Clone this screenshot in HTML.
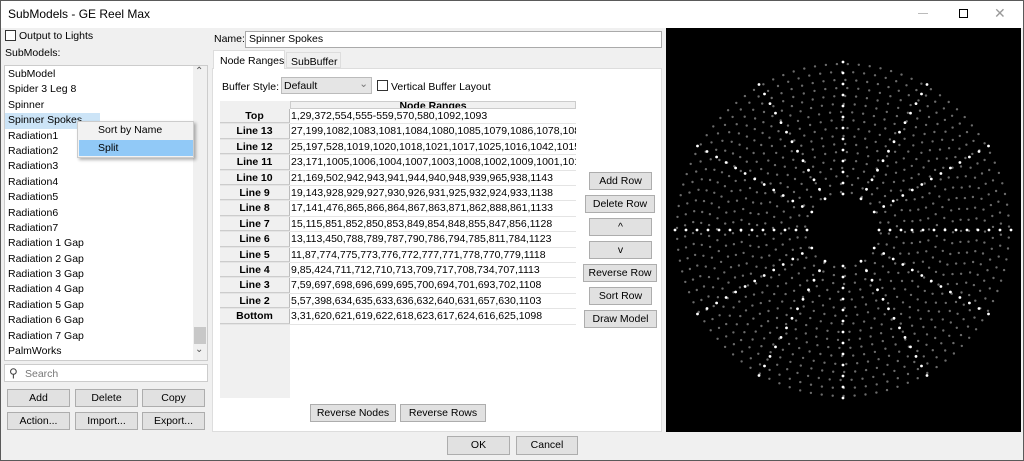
<!DOCTYPE html>
<html><head><meta charset="utf-8"><style>
*{box-sizing:border-box;margin:0;padding:0}
body{width:1024px;height:461px;background:#f0f0f0;font-family:"Liberation Sans",sans-serif;font-size:10.5px;color:#000;position:relative;overflow:hidden}
.a{position:absolute;white-space:nowrap}
.btn{position:absolute;background:#e1e1e1;border:1px solid #adadad;text-align:center;font-size:10.5px;line-height:16px}
.lst div{height:15.4px;line-height:15.4px;padding-left:3px;font-size:10.5px}
.row{position:absolute;left:220px;width:356px;height:15.4px;border-bottom:1px solid #e4e4e4}
.row .h{position:absolute;left:0;width:70px;height:100%;background:#f0f0f0;border-right:1px solid #bbb;border-bottom:1px solid #ccc;text-align:center;font-weight:bold;line-height:15px}
.row .v{position:absolute;left:71px;line-height:15px;white-space:nowrap;overflow:hidden;width:285px}
</style></head><body>
<div class="a" style="left:0;top:0;width:1024px;height:461px;border:1px solid #5a5a5a"></div>
<div class="a" style="left:1px;top:1px;width:1022px;height:27px;background:#fff"></div>
<div class="a" style="left:8px;top:7px;font-size:12px">SubModels - GE Reel Max</div>
<div class="a" style="left:918px;top:13px;width:10px;height:1px;background:#bbb"></div>
<div class="a" style="left:959px;top:9px;width:9px;height:9px;border:1px solid #000"></div>
<div class="a" style="left:994px;top:5px;font-size:14px;color:#999">✕</div>

<div class="a" style="left:5px;top:30px;width:11px;height:11px;border:1px solid #333;background:#fff"></div>
<div class="a" style="left:19px;top:30px">Output to Lights</div>
<div class="a" style="left:5px;top:47px">SubModels:</div>
<div class="a" style="left:4px;top:65px;width:204px;height:296px;background:#fff;border:1px solid #ccc"></div>
<div class="a lst" style="left:5px;top:67px;width:188px">
<div>SubModel</div><div>Spider 3 Leg 8</div><div>Spinner</div><div style="background:#cce4f7;width:95px">Spinner Spokes</div><div>Radiation1</div><div>Radiation2</div><div>Radiation3</div><div>Radiation4</div><div>Radiation5</div><div>Radiation6</div><div>Radiation7</div><div>Radiation 1 Gap</div><div>Radiation 2 Gap</div><div>Radiation 3 Gap</div><div>Radiation 4 Gap</div><div>Radiation 5 Gap</div><div>Radiation 6 Gap</div><div>Radiation 7 Gap</div><div>PalmWorks</div></div>
<div class="a" style="left:193px;top:66px;width:14px;height:294px;background:#f0f0f0"></div>
<div class="a" style="left:194px;top:327px;width:12px;height:17px;background:#c8c8c8"></div>
<div class="a" style="left:195px;top:66px;font-size:10px;color:#555">⌃</div>
<div class="a" style="left:195px;top:344px;font-size:10px;color:#555">⌄</div>
<div class="a" style="left:77px;top:121px;width:117px;height:37px;background:#f2f2f2;border:1px solid #ccc;box-shadow:2px 2px 3px rgba(0,0,0,.3)"></div>
<div class="a" style="left:98px;top:124px">Sort by Name</div>
<div class="a" style="left:79px;top:140px;width:114px;height:16px;background:#91c9f7"></div>
<div class="a" style="left:98px;top:142px">Split</div>

<div class="a" style="left:4px;top:364px;width:204px;height:18px;background:#fff;border:1px solid #ccc"></div>
<div class="a" style="left:9px;top:366px;font-size:12px;color:#444">⚲</div>
<div class="a" style="left:25px;top:368px;color:#777">Search</div>
<div class="btn" style="left:7px;top:389px;width:63px;height:18px">Add</div>
<div class="btn" style="left:75px;top:389px;width:63px;height:18px">Delete</div>
<div class="btn" style="left:142px;top:389px;width:63px;height:18px">Copy</div>
<div class="btn" style="left:7px;top:412px;width:63px;height:18px">Action...</div>
<div class="btn" style="left:75px;top:412px;width:63px;height:18px">Import...</div>
<div class="btn" style="left:142px;top:412px;width:63px;height:18px">Export...</div>

<div class="a" style="left:214px;top:33px">Name:</div>
<div class="a" style="left:245px;top:31px;width:417px;height:17px;background:#fff;border:1px solid #aaa;padding-left:3px;line-height:15px">Spinner Spokes</div>
<div class="a" style="left:212px;top:68px;width:450px;height:364px;background:#fff;border:1px solid #ddd"></div>
<div class="a" style="left:213px;top:50px;width:72px;height:19px;background:#fff;border:1px solid #ddd;border-bottom:none;padding:4px 0 0 6px">Node Ranges</div>
<div class="a" style="left:286px;top:52px;width:55px;height:16px;background:#f0f0f0;border:1px solid #ddd;padding:3px 0 0 4px">SubBuffer</div>
<div class="a" style="left:222px;top:81px">Buffer Style:</div>
<div class="a" style="left:281px;top:77px;width:91px;height:17px;background:#e5e5e5;border:1px solid #bbb;padding:2px 0 0 2px">Default<span style="position:absolute;right:3px;top:0;color:#777">⌄</span></div>
<div class="a" style="left:377px;top:80px;width:11px;height:11px;border:1px solid #333"></div>
<div class="a" style="left:391px;top:81px">Vertical Buffer Layout</div>
<div class="a" style="left:220px;top:101px;width:70px;height:297px;background:#f0f0f0"></div>
<div class="a" style="left:290px;top:101px;width:286px;height:8px;background:#f0f0f0;border:1px solid #ccc;overflow:hidden;text-align:center;font-weight:bold;line-height:9px">Node Ranges</div>
<div id="g"></div>

<div class="btn" style="left:589px;top:172px;width:63px;height:18px">Add Row</div>
<div class="btn" style="left:585px;top:195px;width:70px;height:18px">Delete Row</div>
<div class="btn" style="left:589px;top:218px;width:63px;height:18px">^</div>
<div class="btn" style="left:589px;top:241px;width:63px;height:18px">v</div>
<div class="btn" style="left:583px;top:264px;width:74px;height:18px">Reverse Row</div>
<div class="btn" style="left:589px;top:287px;width:63px;height:18px">Sort Row</div>
<div class="btn" style="left:584px;top:310px;width:73px;height:18px">Draw Model</div>
<div class="btn" style="left:310px;top:404px;width:86px;height:18px">Reverse Nodes</div>
<div class="btn" style="left:400px;top:404px;width:86px;height:18px">Reverse Rows</div>
<div class="btn" style="left:447px;top:436px;width:63px;height:19px">OK</div>
<div class="btn" style="left:516px;top:436px;width:62px;height:19px">Cancel</div>

<svg class="a" style="left:666px;top:28px" width="355" height="404"><rect width="355" height="404" fill="#000"/><g id="d"></g></svg>
<script>
var rows=[["Top","1,29,372,554,555-559,570,580,1092,1093"],["Line 13","27,199,1082,1083,1081,1084,1080,1085,1079,1086,1078,1087,1188"],["Line 12","25,197,528,1019,1020,1018,1021,1017,1025,1016,1042,1015,1158"],["Line 11","23,171,1005,1006,1004,1007,1003,1008,1002,1009,1001,1010,1153"],["Line 10","21,169,502,942,943,941,944,940,948,939,965,938,1143"],["Line 9","19,143,928,929,927,930,926,931,925,932,924,933,1138"],["Line 8","17,141,476,865,866,864,867,863,871,862,888,861,1133"],["Line 7","15,115,851,852,850,853,849,854,848,855,847,856,1128"],["Line 6","13,113,450,788,789,787,790,786,794,785,811,784,1123"],["Line 5","11,87,774,775,773,776,772,777,771,778,770,779,1118"],["Line 4","9,85,424,711,712,710,713,709,717,708,734,707,1113"],["Line 3","7,59,697,698,696,699,695,700,694,701,693,702,1108"],["Line 2","5,57,398,634,635,633,636,632,640,631,657,630,1103"],["Bottom","3,31,620,621,619,622,618,623,617,624,616,625,1098"]];
var h="";rows.forEach(function(r,i){h+='<div class="row" style="top:'+(109+i*15.4)+'px"><div class="h">'+r[0]+'</div><div class="v">'+r[1]+'</div></div>'});
document.getElementById("g").innerHTML=h;
var cx=177,cy=202,s="";
for(var r=38;r<=170;r+=8){var n=Math.round(2*Math.PI*r/11);for(var k=0;k<n;k++){var a=2*Math.PI*k/n+r*0.07;s+='<circle cx="'+(cx+r*Math.cos(a)).toFixed(1)+'" cy="'+(cy+r*Math.sin(a)).toFixed(1)+'" r="1.2" fill="#6a6a6a"/>';}}
for(var j=0;j<12;j++){var a=j*Math.PI/6-Math.PI/2;for(var r=36;r<=170;r+=11){s+='<circle cx="'+(cx+r*Math.cos(a)).toFixed(1)+'" cy="'+(cy+r*Math.sin(a)).toFixed(1)+'" r="1.4" fill="#fff"/>';}}
document.getElementById("d").innerHTML=s;
</script>
</body></html>
